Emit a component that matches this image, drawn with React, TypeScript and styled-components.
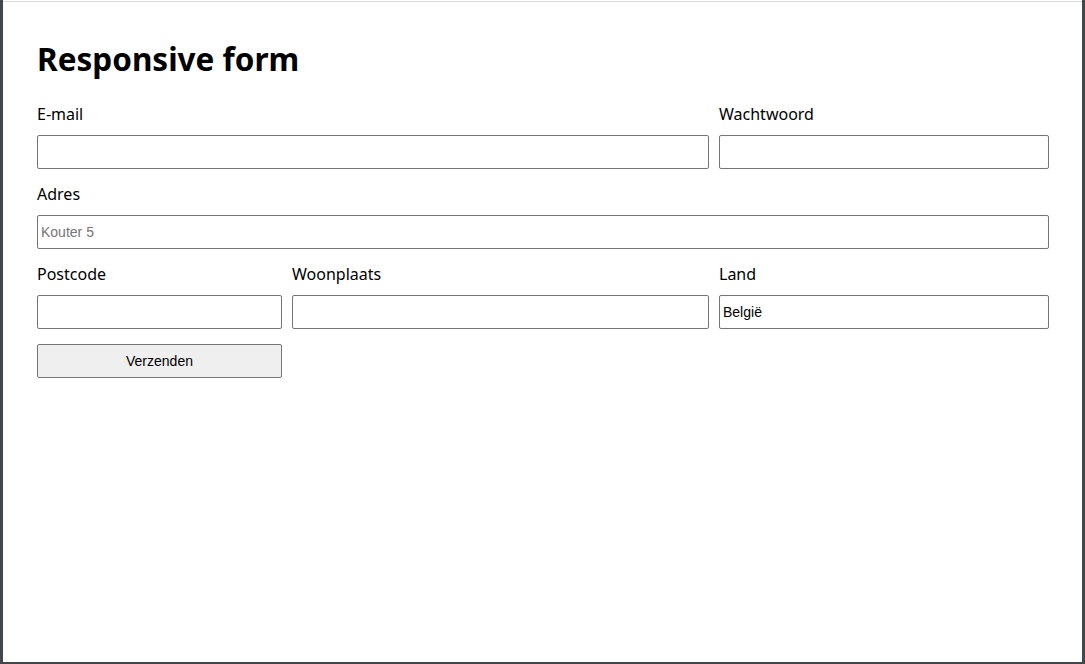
import React from "react";
import styled, { createGlobalStyle } from "styled-components";

const GlobalStyle = createGlobalStyle`
  html, body {
    margin: 0;
    padding: 0;
    background: #ffffff;
  }
  * {
    box-sizing: border-box;
  }
`;

export default function App() {
  return (
    <>
      <GlobalStyle />
      <Frame>
        <TopLine />
        <Content>
          <Title>Responsive form</Title>
          <Form onSubmit={(e) => e.preventDefault()}>
            <Field span="1 / 3">
              <Label htmlFor="email">E-mail</Label>
              <Input id="email" type="email" />
            </Field>
            <Field span="3 / 4">
              <Label htmlFor="password">Wachtwoord</Label>
              <Input id="password" type="password" />
            </Field>
            <Field span="1 / 4">
              <Label htmlFor="address">Adres</Label>
              <Input id="address" placeholder="Kouter 5" />
            </Field>
            <Field span="1 / 2">
              <Label htmlFor="zip">Postcode</Label>
              <Input id="zip" />
            </Field>
            <Field span="2 / 3">
              <Label htmlFor="city">Woonplaats</Label>
              <Input id="city" />
            </Field>
            <Field span="3 / 4">
              <Label htmlFor="country">Land</Label>
              <Input id="country" defaultValue="België" />
            </Field>
            <SubmitButton type="submit">Verzenden</SubmitButton>
          </Form>
        </Content>
      </Frame>
    </>
  );
}

const Frame = styled.div`
  min-height: 100vh;
  border-left: 3px solid #41474d;
  border-right: 3px solid #41474d;
  border-bottom: 2px solid #41474d;
  background: #ffffff;
  display: flex;
  flex-direction: column;
`;

const TopLine = styled.div`
  height: 1px;
  margin-top: 1px;
  background: #dadada;
`;

const Content = styled.div`
  padding: 37px 33px 0 34px;
`;

const Title = styled.h1`
  margin: 0 0 25px 0;
  font-family: "Noto Sans", "Open Sans", sans-serif;
  font-size: 31.5px;
  font-weight: 700;
  line-height: 40px;
  color: #000000;
`;

const Form = styled.form`
  display: grid;
  grid-template-columns: 245px 1fr 330px;
  column-gap: 10px;
  row-gap: 15px;
`;

const Field = styled.div<{ span: string }>`
  grid-column: ${(p) => p.span};
  display: flex;
  flex-direction: column;
  gap: 11px;
`;

const Label = styled.label`
  font-family: "Noto Sans", "Open Sans", sans-serif;
  font-size: 16px;
  line-height: 20px;
  color: #000000;
`;

const Input = styled.input`
  height: 34px;
  width: 100%;
  margin: 0;
  padding: 0 3px;
  border: 1px solid #767676;
  border-radius: 2px;
  font-family: "Liberation Sans", Arial, sans-serif;
  font-size: 14px;
  color: #000000;
  background: #ffffff;

  &::placeholder {
    color: #757575;
  }
`;

const SubmitButton = styled.button`
  grid-column: 1 / 2;
  height: 34px;
  border: 1px solid #767676;
  border-radius: 2px;
  background: #efefef;
  font-family: "Liberation Sans", Arial, sans-serif;
  font-size: 14px;
  color: #000000;
`;
